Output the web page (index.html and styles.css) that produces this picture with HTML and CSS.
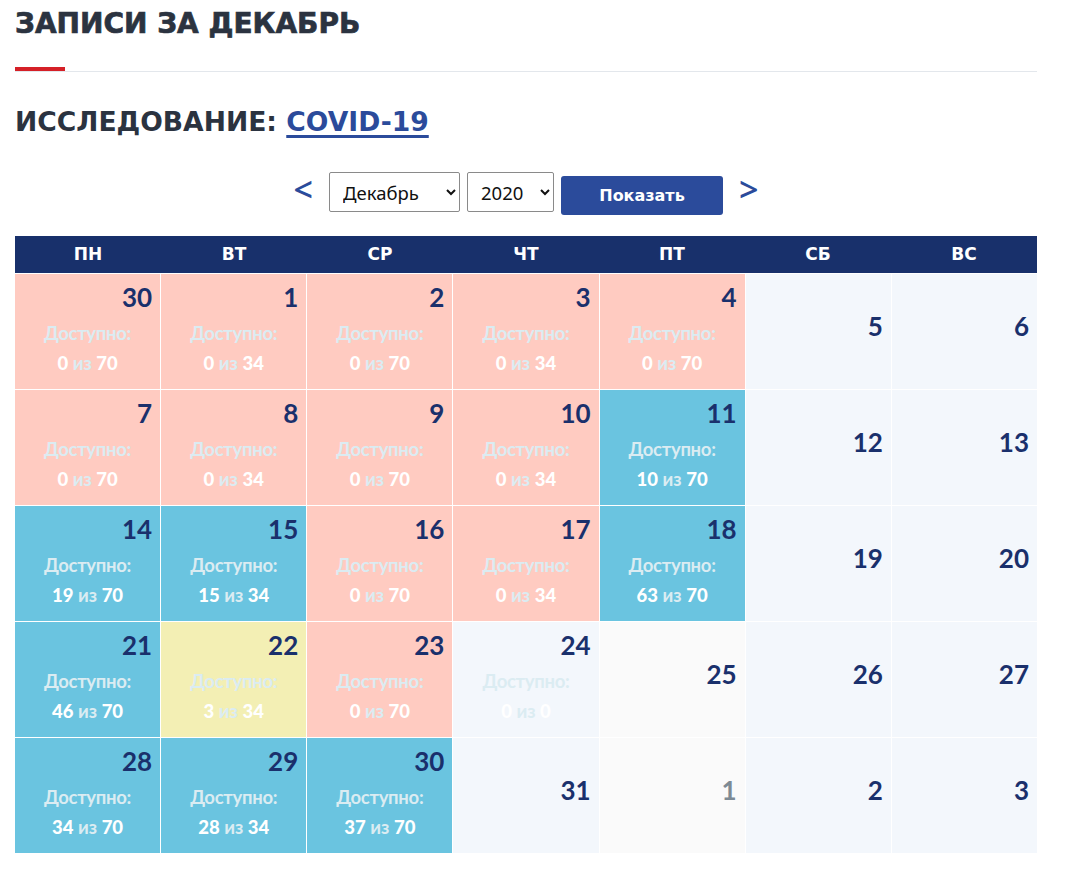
FILE: index.html
```html
<!DOCTYPE html>
<html lang="ru">
<head>
<meta charset="utf-8">
<title>Записи за декабрь</title>
<link rel="stylesheet" href="styles.css">
</head>
<body>
<div class="page">
  <h1 class="title">ЗАПИСИ ЗА ДЕКАБРЬ</h1>
  <div class="divider"><span class="divider-accent"></span></div>
  <h2 class="subtitle">ИССЛЕДОВАНИЕ: <a href="#" class="subtitle-link">COVID-19</a></h2>

  <form class="nav">
    <a href="#" class="nav-arrow nav-arrow-prev">&lt;</a>
    <select class="nav-select nav-select-month">
      <option>Декабрь</option>
    </select>
    <select class="nav-select nav-select-year">
      <option>2020</option>
    </select>
    <button type="button" class="nav-button">Показать</button>
    <a href="#" class="nav-arrow nav-arrow-next">&gt;</a>
  </form>

  <div class="calendar">
    <div class="cal-head">
      <div class="cal-head-cell">ПН</div>
      <div class="cal-head-cell">ВТ</div>
      <div class="cal-head-cell">СР</div>
      <div class="cal-head-cell">ЧТ</div>
      <div class="cal-head-cell">ПТ</div>
      <div class="cal-head-cell">СБ</div>
      <div class="cal-head-cell">ВС</div>
    </div>
    <div class="cal-body">
      <div class="cell cell-full"><div class="day">30</div><div class="avail">Доступно:</div><div class="count"><b>0</b> из <b>70</b></div></div>
      <div class="cell cell-full"><div class="day">1</div><div class="avail">Доступно:</div><div class="count"><b>0</b> из <b>34</b></div></div>
      <div class="cell cell-full"><div class="day">2</div><div class="avail">Доступно:</div><div class="count"><b>0</b> из <b>70</b></div></div>
      <div class="cell cell-full"><div class="day">3</div><div class="avail">Доступно:</div><div class="count"><b>0</b> из <b>34</b></div></div>
      <div class="cell cell-full"><div class="day">4</div><div class="avail">Доступно:</div><div class="count"><b>0</b> из <b>70</b></div></div>
      <div class="cell cell-off"><div class="day">5</div></div>
      <div class="cell cell-off"><div class="day">6</div></div>

      <div class="cell cell-full"><div class="day">7</div><div class="avail">Доступно:</div><div class="count"><b>0</b> из <b>70</b></div></div>
      <div class="cell cell-full"><div class="day">8</div><div class="avail">Доступно:</div><div class="count"><b>0</b> из <b>34</b></div></div>
      <div class="cell cell-full"><div class="day">9</div><div class="avail">Доступно:</div><div class="count"><b>0</b> из <b>70</b></div></div>
      <div class="cell cell-full"><div class="day">10</div><div class="avail">Доступно:</div><div class="count"><b>0</b> из <b>34</b></div></div>
      <div class="cell cell-open"><div class="day">11</div><div class="avail">Доступно:</div><div class="count"><b>10</b> из <b>70</b></div></div>
      <div class="cell cell-off"><div class="day">12</div></div>
      <div class="cell cell-off"><div class="day">13</div></div>

      <div class="cell cell-open"><div class="day">14</div><div class="avail">Доступно:</div><div class="count"><b>19</b> из <b>70</b></div></div>
      <div class="cell cell-open"><div class="day">15</div><div class="avail">Доступно:</div><div class="count"><b>15</b> из <b>34</b></div></div>
      <div class="cell cell-full"><div class="day">16</div><div class="avail">Доступно:</div><div class="count"><b>0</b> из <b>70</b></div></div>
      <div class="cell cell-full"><div class="day">17</div><div class="avail">Доступно:</div><div class="count"><b>0</b> из <b>34</b></div></div>
      <div class="cell cell-open"><div class="day">18</div><div class="avail">Доступно:</div><div class="count"><b>63</b> из <b>70</b></div></div>
      <div class="cell cell-off"><div class="day">19</div></div>
      <div class="cell cell-off"><div class="day">20</div></div>

      <div class="cell cell-open"><div class="day">21</div><div class="avail">Доступно:</div><div class="count"><b>46</b> из <b>70</b></div></div>
      <div class="cell cell-few"><div class="day">22</div><div class="avail">Доступно:</div><div class="count"><b>3</b> из <b>34</b></div></div>
      <div class="cell cell-full"><div class="day">23</div><div class="avail">Доступно:</div><div class="count"><b>0</b> из <b>70</b></div></div>
      <div class="cell cell-empty"><div class="day">24</div><div class="avail">Доступно:</div><div class="count"><b>0</b> из <b>0</b></div></div>
      <div class="cell cell-off cell-holiday"><div class="day">25</div></div>
      <div class="cell cell-off"><div class="day">26</div></div>
      <div class="cell cell-off"><div class="day">27</div></div>

      <div class="cell cell-open"><div class="day">28</div><div class="avail">Доступно:</div><div class="count"><b>34</b> из <b>70</b></div></div>
      <div class="cell cell-open"><div class="day">29</div><div class="avail">Доступно:</div><div class="count"><b>28</b> из <b>34</b></div></div>
      <div class="cell cell-open"><div class="day">30</div><div class="avail">Доступно:</div><div class="count"><b>37</b> из <b>70</b></div></div>
      <div class="cell cell-off"><div class="day">31</div></div>
      <div class="cell cell-off cell-holiday cell-other"><div class="day">1</div></div>
      <div class="cell cell-off"><div class="day">2</div></div>
      <div class="cell cell-off"><div class="day">3</div></div>
    </div>
  </div>
</div>
</body>
</html>
```
FILE: styles.css
```css
* { box-sizing: border-box; }

body {
  margin: 0;
  background: #ffffff;
  font-family: "Lato", "Liberation Sans", sans-serif;
  color: #2b3340;
}

.page {
  width: 1022px;
  margin-left: 15px;
  padding-top: 5px;
}

.title {
  margin: 0;
  font-family: "DejaVu Sans", "Open Sans", sans-serif;
  font-size: 28px;
  line-height: 38px;
  font-weight: 700;
  color: #2b3340;
  -webkit-text-stroke: 0.7px #2b3340;
}

.divider {
  margin-top: 24px;
  height: 5px;
  border-bottom: 1px solid #e3e7ec;
  display: flex;
  align-items: flex-start;
}

.divider-accent {
  width: 50px;
  height: 4px;
  background: #d52027;
}

.subtitle {
  margin: 33px 0 0 0;
  font-family: "DejaVu Sans", "Open Sans", sans-serif;
  font-size: 26.6px;
  line-height: 34px;
  font-weight: 700;
  color: #2b3340;
}

.subtitle-link {
  color: #2b4b9b;
  text-decoration: underline;
  text-decoration-thickness: 3px;
  text-underline-offset: 4px;
}

.nav {
  margin-top: 33px;
  display: flex;
  justify-content: center;
  align-items: flex-start;
  height: 43px;
}

.nav-arrow {
  color: #2b4b9b;
  text-decoration: none;
  font-family: "Open Sans", "Lato", sans-serif;
  font-size: 34px;
  line-height: 34px;
  font-weight: 600;
}

.nav-arrow-prev { margin-right: 16px; }
.nav-arrow-next { margin-left: 16px; }

.nav-select {
  height: 40px;
  border: 1px solid #8a8a8a;
  border-radius: 2px;
  background: #ffffff;
  font-family: "Noto Sans", "Open Sans", sans-serif;
  font-size: 18.5px;
  color: #111111;
  padding: 0 6px 0 9px;
  margin-right: 7px;
}

.nav-select-month { width: 131px; }
.nav-select-year { width: 87px; }

.nav-button {
  margin-top: 4px;
  width: 162px;
  height: 39px;
  border: none;
  border-radius: 3px;
  background: #2b4b9b;
  color: #ffffff;
  font-family: "DejaVu Sans", "Open Sans", sans-serif;
  font-size: 16px;
  font-weight: 700;
}

.calendar {
  margin-top: 21px;
}

.cal-head {
  display: grid;
  grid-template-columns: repeat(7, 1fr);
  background: #18306b;
  height: 37px;
}

.cal-head-cell {
  color: #ffffff;
  font-family: "DejaVu Sans", "Open Sans", sans-serif;
  font-size: 17px;
  font-weight: 700;
  text-align: center;
  line-height: 37px;
}

.cal-body {
  margin-top: 1px;
  display: grid;
  grid-template-columns: repeat(7, 1fr);
  grid-auto-rows: 115px;
  gap: 1px;
}

.cell {
  padding: 8px 8px 0 8px;
  text-align: center;
}

.day {
  text-align: right;
  font-size: 26px;
  line-height: 30px;
  font-weight: 700;
  color: #1a306c;
}

.avail {
  margin-top: 6px;
  font-size: 18.5px;
  line-height: 30px;
  font-weight: 700;
  color: #dbecf2;
  letter-spacing: -0.3px;
}

.count {
  font-size: 18.5px;
  line-height: 30px;
  font-weight: 700;
  color: #dbecf2;
}

.count b {
  color: #ffffff;
}

.cell-full { background: #ffcbc1; }
.cell-open { background: #6ac4e0; }
.cell-few { background: #f3efb4; }
.cell-empty { background: #f3f7fc; }

.cell-off {
  background: #f3f7fc;
  display: flex;
  align-items: center;
  justify-content: flex-end;
  padding: 0 8px 12px 8px;
}

.cell-holiday { background: #fafafa; }

.cell-other .day { color: #7d8a94; }
```
